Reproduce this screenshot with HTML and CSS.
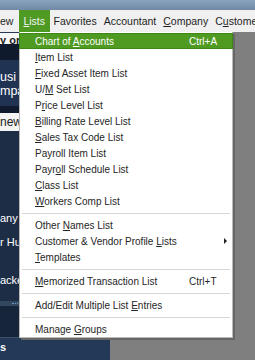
FILE: index.html
```html
<!DOCTYPE html>
<html>
<head>
<meta charset="utf-8">
<link rel="stylesheet" href="styles.css">
</head>
<body>
<div class="app">
  <div class="titlebar"></div>
  <div class="menubar">
    <span class="mb-item first">ew</span>
    <span class="mb-item active"><u>L</u>ists</span>
    <span class="mb-item">Favorites</span>
    <span class="mb-item">Accountant</span>
    <span class="mb-item"><u>C</u>ompany</span>
    <span class="mb-item last">C<u>u</u>stome</span>
  </div>
  <div class="main">
    <div class="left">
      <div class="lp-input">y or</div>
      <div class="lp-deep"></div>
      <div class="lp-head">usi<br>mpa</div>
      <div class="lp-deep short"></div>
      <div class="lp-btn">new</div>
      <div class="lp-list">
        <div class="lp-link l1">any</div>
        <div class="lp-link l2">r Hu</div>
        <div class="lp-link l3">acke</div>
      </div>
      <div class="lp-rule"><span class="dots"></span></div>
      <div class="lp-deep tall"></div>
      <div class="lp-foot">s</div>
    </div>
    <div class="gray"></div>
  </div>

  <div class="menu">
    <div class="row hl"><span>Chart of <u>A</u>ccounts</span><span>Ctrl+A</span></div>
    <div class="row"><span><u>I</u>tem List</span></div>
    <div class="row"><span><u>F</u>ixed Asset Item List</span></div>
    <div class="row"><span>U/<u>M</u> Set List</span></div>
    <div class="row"><span>P<u>r</u>ice Level List</span></div>
    <div class="row"><span><u>B</u>illing Rate Level List</span></div>
    <div class="row"><span><u>S</u>ales Tax Code List</span></div>
    <div class="row"><span>Payroll Item List</span></div>
    <div class="row"><span>Payr<u>o</u>ll Schedule List</span></div>
    <div class="row"><span><u>C</u>lass List</span></div>
    <div class="row"><span><u>W</u>orkers Comp List</span></div>
    <div class="sep"></div>
    <div class="row"><span>Other <u>N</u>ames List</span></div>
    <div class="row"><span>Customer &amp; Vendor Profile <u>L</u>ists</span><span class="arrow"></span></div>
    <div class="row"><span><u>T</u>emplates</span></div>
    <div class="sep"></div>
    <div class="row"><span><u>M</u>emorized Transaction List</span><span>Ctrl+T</span></div>
    <div class="sep"></div>
    <div class="row"><span>Add/Edit Multiple List <u>E</u>ntries</span></div>
    <div class="sep"></div>
    <div class="row"><span>Manage <u>G</u>roups</span></div>
  </div>
</div>
</body>
</html>
```
FILE: styles.css
```css
* { box-sizing: border-box; }
html, body { margin: 0; padding: 0; }
body {
  width: 255px;
  height: 360px;
  overflow: hidden;
  font-family: "Liberation Sans", Arial, sans-serif;
  background: #7f7f7f;
}
.app {
  position: relative;
  width: 255px;
  height: 360px;
  overflow: hidden;
  display: flex;
  flex-direction: column;
}
.titlebar {
  height: 10px;
  flex: none;
  background: linear-gradient(#8aa3bc, #6f8aa6);
}
.menubar {
  height: 22px;
  flex: none;
  display: flex;
  align-items: stretch;
  background: #f0f0f0;
  font-size: 10.5px;
  color: #1e1e1e;
  white-space: nowrap;
  overflow: hidden;
}
.mb-item {
  display: flex;
  align-items: center;
  padding: 0 3.5px;
  line-height: 1;
  flex: none;
}
.mb-item.first { padding: 0 6px 0 0; }
.mb-item.last { padding-right: 0; }
.mb-item.active {
  background: #4e9a23;
  color: #f4f4f4;
  padding: 0 5px 0 4px;
}
.main {
  flex: 1;
  display: flex;
}
.left {
  width: 110px;
  flex: none;
  display: flex;
  flex-direction: column;
  background: #1e2e47;
  color: #fff;
  white-space: nowrap;
  overflow: hidden;
}
.lp-input {
  height: 12px;
  background: #f7f7f7;
  color: #1a1a1a;
  font-size: 11px;
  font-weight: bold;
  line-height: 14px;
  border-top: 1px solid #2a3a52;
}
.lp-deep { height: 16px; background: #0f1b2d; }
.lp-deep.short { height: 7px; }
.lp-deep.tall { flex: 1; background: #17253a; }
.lp-head {
  height: 46px;
  background: #203353;
  font-size: 12.5px;
  line-height: 14px;
  padding-top: 10px;
}
.lp-btn {
  height: 18px;
  background: #f4f4f4;
  color: #202020;
  font-size: 12px;
  line-height: 18px;
}
.lp-list {
  height: 170px;
  background: #1d2d46;
  font-size: 11px;
  display: flex;
  flex-direction: column;
}
.lp-link { line-height: 14px; }
.l1 { margin-top: 80px; }
.l2 { margin-top: 10px; }
.l3 { margin-top: 24px; }
.lp-rule {
  height: 5px;
  background: #33475f;
  display: flex;
  align-items: center;
  padding-left: 12px;
}
.dots {
  width: 6px;
  height: 1px;
  border-top: 1px dotted #6d9bd4;
}
.lp-foot {
  height: 23px;
  background: #243858;
  border-top: 1px solid #3b506e;
  font-size: 11px;
  font-weight: bold;
  line-height: 18px;
}
.gray { flex: 1; background: #7f7f7f; }

.menu {
  position: absolute;
  left: 19px;
  top: 32px;
  width: 214px;
  height: 306px;
  background: #fff;
  border: 1px solid #b9b9b9;
  border-top: none;
  padding-top: 1px;
  box-shadow: 2px 2px 0 #676767;
  font-size: 10px;
  color: #262626;
}
.row {
  height: 16px;
  display: grid;
  grid-template-columns: 154px 1fr;
  align-items: center;
  padding-left: 15px;
  white-space: nowrap;
}
.row.hl {
  background: #4f9b22;
  color: #fff;
  margin: 0 -1px;
  padding-left: 16px;
  outline: 1px solid #3f8619;
  outline-offset: -1px;
}
.sep {
  height: 8px;
  display: flex;
  align-items: center;
  padding: 0 2px;
}
.sep::before {
  content: "";
  flex: 1;
  height: 1px;
  background: #d6d6d6;
}
.arrow {
  width: 0;
  height: 0;
  margin-left: 35px;
  border-left: 3px solid #222;
  border-top: 3px solid transparent;
  border-bottom: 3px solid transparent;
}
```
